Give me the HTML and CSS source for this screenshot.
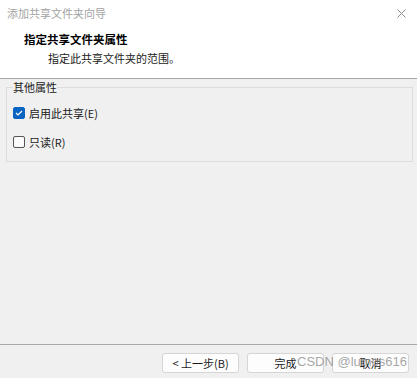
FILE: index.html
```html
<!DOCTYPE html>
<html lang="zh-CN">
<head>
<meta charset="utf-8">
<title>添加共享文件夹向导</title>
<link rel="stylesheet" href="styles.css">
</head>
<body>
<div class="window">
  <div class="titlebar">
    <span class="title">添加共享文件夹向导</span>
    <svg class="close" width="9" height="9" viewBox="0 0 9 9"><path d="M0.5 0.5 L8.5 8.5 M8.5 0.5 L0.5 8.5" stroke="#8a8a8a" stroke-width="1" fill="none"/></svg>
  </div>
  <div class="header">
    <div class="h-title">指定共享文件夹属性</div>
    <div class="h-sub">指定此共享文件夹的范围。</div>
  </div>
  <div class="content">
    <fieldset class="group">
      <legend>其他属性</legend>
      <label class="row"><span class="box checked"><svg width="8" height="6" viewBox="0 0 8 6"><path d="M1 3 L3 5 L7 1" stroke="#fff" stroke-width="1.2" fill="none"/></svg></span><span>启用此共享(E)</span></label>
      <label class="row"><span class="box"></span><span>只读(R)</span></label>
    </fieldset>
  </div>
  <div class="footer">
    <button class="btn">&lt; 上一步(B)</button>
    <button class="btn">完成</button>
    <button class="btn">取消</button>
    <span class="watermark">CSDN @lumos616</span>
  </div>
</div>
</body>
</html>
```
FILE: styles.css
```css
html, body {
  margin: 0;
  padding: 0;
}
body {
  width: 417px;
  height: 378px;
  overflow: hidden;
  font-family: "Noto Sans CJK SC", "Noto Sans", sans-serif;
  font-size: 11px;
  color: #1a1a1a;
  background: #f0f0f0;
}
.window {
  display: flex;
  flex-direction: column;
  height: 378px;
  position: relative;
}
.titlebar {
  height: 26px;
  flex: none;
  background: #fff;
  display: flex;
  align-items: center;
  justify-content: space-between;
  padding: 0 11px 0 7px;
}
.title {
  color: #a3a3a3;
  font-size: 11px;
  line-height: 14px;
}
.header {
  background: #fff;
  flex: none;
  padding: 6px 0 0 24px;
  box-sizing: border-box;
  border-bottom: 1px solid #a8a8a8;
  height: 53px;
}
.h-title {
  font-weight: bold;
  font-size: 11.5px;
  line-height: 14px;
  color: #000;
}
.h-sub {
  margin-top: 5px;
  padding-left: 24px;
  line-height: 14px;
  color: #222;
}
.content {
  flex: 1;
  padding: 1px 4px 0 6px;
}
.group {
  margin: 0;
  border: 1px solid #dcdcdc;
  padding: 11px 6px 11px 6px;
  display: flex;
  flex-direction: column;
  gap: 13px;
}
.group legend {
  padding: 0;
  line-height: 14px;
  color: #1a1a1a;
}
.row {
  display: flex;
  align-items: center;
  gap: 4px;
  height: 16px;
  line-height: 16px;
}
.box {
  width: 10px;
  height: 10px;
  border: 1px solid #555;
  border-radius: 2px;
  background: #fbfbfb;
  display: flex;
  align-items: center;
  justify-content: center;
}
.box.checked {
  background: #0a64c2;
  border-color: #0a64c2;
}
.footer {
  flex: none;
  box-sizing: border-box;
  height: 34px;
  border-top: 1px solid #a8a8a8;
  display: flex;
  justify-content: flex-end;
  align-items: flex-start;
  gap: 8px;
  padding: 8px 8px 0 0;
  position: relative;
}
.btn {
  width: 77px;
  height: 20px;
  background: #fdfdfd;
  border: 1px solid #d5d5d5;
  border-radius: 3px;
  font-family: "Noto Sans CJK SC", "Noto Sans", sans-serif;
  font-size: 11px;
  line-height: 16px;
  color: #1a1a1a;
  padding: 0;
}
.watermark {
  position: absolute;
  left: 297px;
  top: 9px;
  font-family: "Liberation Sans", Arial, sans-serif;
  font-size: 13px;
  line-height: 16px;
  color: rgba(150, 150, 150, 0.85);
}
```
